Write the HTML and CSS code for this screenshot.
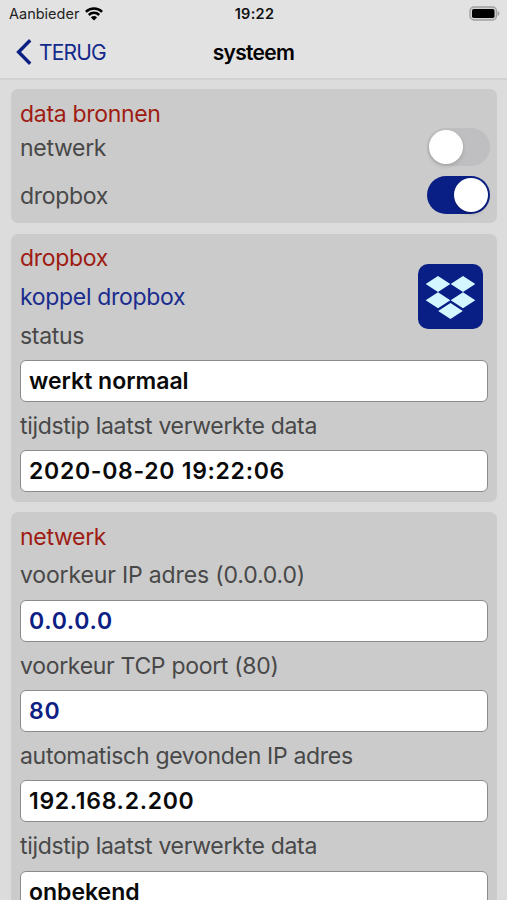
FILE: index.html
```html
<!DOCTYPE html>
<html lang="nl">
<head>
  <meta charset="UTF-8" />
  <meta name="viewport" content="width=device-width, initial-scale=1.0"/>
  <title>systeem</title>
  <link rel="stylesheet" href="styles.css">
</head>
<body>
  <header>
    <div class="status-bar">
      <div class="carrier">
        <span>Aanbieder</span>
        <svg width="18" height="14" viewBox="0 0 18 14" fill="none" stroke="#000" stroke-width="2.5">
          <path d="M.9 4.9a11.5 11.5 0 0 1 16.2 0" />
          <path d="M3.8 8a7.4 7.4 0 0 1 10.4 0" />
          <path d="M9 13.6 5.9 10.4a4.4 4.4 0 0 1 6.2 0z" fill="#000" stroke="none" />
        </svg>
      </div>
      <div class="clock">19:22</div>
      <div class="battery">
        <svg width="31" height="15" viewBox="0 0 31 15">
          <rect x="1" y="1" width="26.5" height="13" rx="4" fill="#d2d2d2" stroke="#a0a0a0" stroke-width="1.4" />
          <rect x="3" y="3" width="22.5" height="9" rx="1.8" fill="#000" />
          <path d="M28.7 5v5c1.1-.5 1.8-1.4 1.8-2.5S29.8 5.5 28.7 5z" fill="#a0a0a0" />
        </svg>
      </div>
    </div>
    <nav>
      <a href="#" class="back">
        <svg width="16" height="26" viewBox="0 0 16 26" fill="none" stroke="#0c2084" stroke-width="3.4">
          <path d="M14.2 1.3 2.6 13l11.6 11.7" />
        </svg>
        <span>TERUG</span>
      </a>
      <h1>systeem</h1>
    </nav>
  </header>

  <main>
    <section class="card sources">
      <h2>data bronnen</h2>
      <div class="switch-row">
        <span>netwerk</span>
        <button class="switch" title="netwerk"></button>
      </div>
      <div class="switch-row">
        <span>dropbox</span>
        <button class="switch on" title="dropbox"></button>
      </div>
    </section>

    <section class="card">
      <div class="link-row">
        <div>
          <h2>dropbox</h2>
          <a href="#" class="link">koppel dropbox</a>
        </div>
        <svg class="dropbox-logo" width="65" height="65" viewBox="0 0 65 65">
          <rect width="65" height="65" rx="10" fill="#0a1f85" />
          <path fill="#d4f7ff" d="M20 12l12.3 8L20 28 7.7 20zM45 12l12.3 8L45 28l-12.3-8zM20 28.3l12.3 8-12.3 8-12.3-8zM45 28.3l12.3 8-12.3 8-12.3-8zM32.5 39l12.3 8-12.3 8-12.3-8z" />
        </svg>
      </div>
      <div class="field">
        <label>status</label>
        <div class="value">werkt normaal</div>
      </div>
      <div class="field">
        <label>tijdstip laatst verwerkte data</label>
        <div class="value number">2020-08-20 19:22:06</div>
      </div>
    </section>

    <section class="card network">
      <h2>netwerk</h2>
      <div class="field">
        <label class="hint">voorkeur IP adres (0.0.0.0)</label>
        <div class="value number editable">0.0.0.0</div>
      </div>
      <div class="field">
        <label>voorkeur TCP poort (80)</label>
        <div class="value number editable">80</div>
      </div>
      <div class="field">
        <label>automatisch gevonden IP adres</label>
        <div class="value number">192.168.2.200</div>
      </div>
      <div class="field">
        <label>tijdstip laatst verwerkte data</label>
        <div class="value">onbekend</div>
      </div>
    </section>
  </main>
</body>
</html>
```
FILE: styles.css
```css
* {
  box-sizing: border-box;
}

body {
  margin: 0;
  height: 900px;
  font-family: Inter, "Liberation Sans", sans-serif;
  font-size: 23px;
  letter-spacing: -0.31px;
  color: #484848;
  background-color: #dcdcdc;
  overflow: hidden;
}

header {
  height: 80px;
  background-color: #e2e2e2;
  border-bottom: 2px solid #d2d2d2;
}

.status-bar {
  display: grid;
  grid-template-columns: 1fr auto 1fr;
  align-items: center;
  height: 27px;
  padding: 0 7px 0 9px;
  font-size: 14.5px;
  letter-spacing: 0;
  color: #222;
}

.carrier {
  display: flex;
  align-items: center;
  gap: 6px;
}

.clock {
  font-weight: 600;
  letter-spacing: 0.3px;
  color: #111;
}

.battery {
  display: flex;
  justify-content: flex-end;
}

nav {
  display: grid;
  grid-template-columns: 1fr auto 1fr;
  align-items: center;
  height: 50px;
  padding: 0 16px;
}

.back {
  display: flex;
  align-items: center;
  gap: 7px;
  color: #14298c;
  text-decoration: none;
  font-size: 21px;
  letter-spacing: -0.8px;
}

h1 {
  margin: 0;
  font-size: 21px;
  font-weight: 600;
  letter-spacing: -0.7px;
  color: #000;
}

main {
  display: flex;
  flex-direction: column;
  gap: 10.5px;
  padding: 9px 10px 0 11px;
}

.card {
  padding: 5px 9px 9.5px;
  border-radius: 7px;
  background-color: #cbcbcb;
}

h2 {
  margin: 0;
  height: 39px;
  font-size: 23px;
  line-height: 40px;
  font-weight: 400;
  color: #9e1b12;
}

.sources {
  height: 134px;
  padding: 5px 7px 0 9px;
}

.sources h2 {
  height: 29px;
  line-height: 41px;
}

.switch-row {
  display: flex;
  justify-content: space-between;
  align-items: center;
  height: 48px;
}

.switch-row span {
  padding-top: 2px;
}

.switch {
  width: 63px;
  height: 38px;
  padding: 2px;
  border: none;
  border-radius: 19px;
  background-color: #bfbfc1;
  display: flex;
}

.switch::before {
  content: "";
  width: 34px;
  height: 34px;
  border-radius: 50%;
  background-color: #fff;
  box-shadow: 0 2px 4px rgba(0,0,0,0.15);
}

.switch.on {
  justify-content: flex-end;
  background-color: #0a1f85;
}

.link-row {
  display: flex;
  justify-content: space-between;
  align-items: center;
  height: 73px;
  padding-right: 5px;
}

.link-row h2 {
  line-height: 38px;
}

.link {
  display: block;
  height: 34px;
  line-height: 38px;
  color: #1a2c8e;
  text-decoration: none;
}

.dropbox-logo {
  flex-shrink: 0;
  margin-top: 42px;
}

.field label {
  display: block;
  height: 48.4px;
  line-height: 49.5px;
}

.field .hint {
  letter-spacing: -0.15px;
}

.value {
  height: 42px;
  padding: 0 8px;
  border: 1.5px solid #8b8b8b;
  border-radius: 6px;
  background-color: #fff;
  color: #0a0a0a;
  font-weight: 600;
  letter-spacing: 0;
  line-height: 41px;
}

.value.number {
  letter-spacing: 0.7px;
}

.value.editable {
  color: #0c2084;
}

.network h2 {
  height: 34px;
}
```
